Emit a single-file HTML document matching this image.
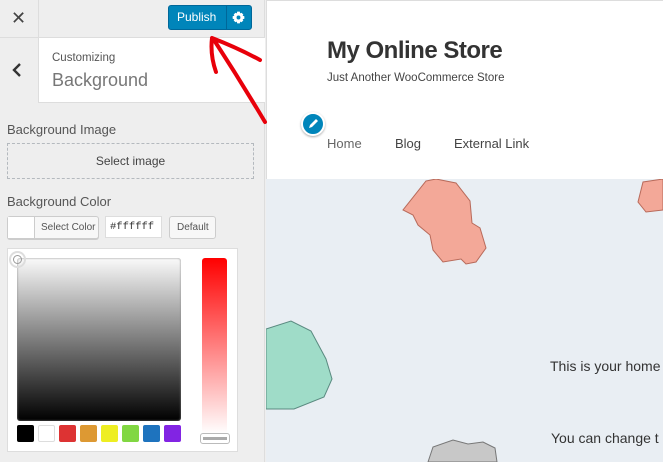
<!DOCTYPE html>
<html><head><style>
*{margin:0;padding:0;box-sizing:border-box}
body{width:663px;height:462px;overflow:hidden;font-family:"Liberation Sans",sans-serif;position:relative;background:#eee}
.abs{position:absolute}
</style></head><body>
<div class="abs" style="left:0;top:0;width:265px;height:462px;background:#eeeeee;border-right:1px solid #ddd"></div>
<div class="abs" style="left:0;top:0;width:265px;height:38px;border-bottom:1px solid #ddd"></div>
<div class="abs" style="left:38px;top:0;width:1px;height:38px;background:#ddd"></div>
<div class="abs" style="left:11px;top:8px;font-size:18px;color:#444">✕</div>
<div class="abs" style="left:168px;top:5px;width:84px;height:25px;background:#0085ba;border:1px solid #006799;border-radius:3px"></div>
<div class="abs" style="left:226px;top:6px;width:1px;height:23px;background:#006799"></div>
<div class="abs" style="left:177px;top:10px;font-size:12px;color:#fff">Publish</div>
<svg class="abs" style="left:232px;top:11px" width="13" height="13" viewBox="0 0 20 20"><path fill="#fff" d="M8 1h4l.6 2.6 2-1 2.8 2.8-1 2L19 8v4l-2.6.6 1 2-2.8 2.8-2-1L12 19H8l-.6-2.6-2 1-2.8-2.8 1-2L1 12V8l2.6-.6-1-2 2.8-2.8 2 1zM10 7a3 3 0 100 6 3 3 0 000-6z"/></svg>
<div class="abs" style="left:0;top:38px;width:265px;height:65px;background:#fff;border-bottom:1px solid #ddd"></div>
<div class="abs" style="left:0;top:38px;width:39px;height:65px;background:#eee;border-right:1px solid #ddd"></div>
<svg class="abs" style="left:12px;top:63px" width="10" height="14"><path d="M8 1L2 7l6 6" stroke="#333" stroke-width="2.4" fill="none"/></svg>
<div class="abs" style="left:52px;top:52px;font-size:11.5px;color:#555">Customizing</div>
<div class="abs" style="left:52px;top:70px;font-size:18px;color:#777">Background</div>
<div class="abs" style="left:7px;top:122px;font-size:13px;color:#555">Background Image</div>
<div class="abs" style="left:7px;top:143px;width:247px;height:36px;border:1px dashed #b4b9be"></div>
<div class="abs" style="left:0;top:154px;width:261px;text-align:center;font-size:12px;color:#444">Select image</div>
<div class="abs" style="left:7px;top:194px;font-size:13px;color:#555">Background Color</div>
<div class="abs" style="left:7px;top:216px;width:92px;height:23px;background:#f7f7f7;border:1px solid #ccc;border-radius:3px;box-shadow:0 1px 0 #ccc"></div>
<div class="abs" style="left:8px;top:217px;width:27px;height:21px;background:#fff;border-right:1px solid #ccc"></div>
<div class="abs" style="left:41px;top:222px;font-size:10px;color:#555">Select Color</div>
<div class="abs" style="left:105px;top:216px;width:57px;height:22px;background:#fff;border:1px solid #ddd"></div>
<div class="abs" style="left:110px;top:221px;font-family:'Liberation Mono',monospace;font-size:10.5px;color:#333">#ffffff</div>
<div class="abs" style="left:169px;top:216px;width:47px;height:23px;background:#f7f7f7;border:1px solid #ccc;border-radius:3px"></div>
<div class="abs" style="left:177px;top:222px;font-size:10px;color:#555">Default</div>
<div class="abs" style="left:7px;top:248px;width:231px;height:204px;background:#fff;border:1px solid #ddd"></div>
<div class="abs" style="left:17px;top:258px;width:164px;height:163px;border-radius:3px;background:linear-gradient(#fafafa,#000);box-shadow:inset 0 0 2px #888"></div>
<div class="abs" style="left:9px;top:251px;width:17px;height:17px;border-radius:50%;border:2px solid #ddd"></div>
<div class="abs" style="left:13px;top:255px;width:9px;height:9px;border-radius:50%;border:1px solid #999"></div>
<div class="abs" style="left:202px;top:258px;width:25px;height:176px;border-radius:3px;background:linear-gradient(#f00,#fff)"></div>
<div class="abs" style="left:200px;top:433px;width:30px;height:11px;border:1px solid #bbb;border-radius:3px;background:#fff"></div>
<div class="abs" style="left:203px;top:437px;width:24px;height:3px;background:#aaa"></div>
<div class="abs" style="left:17px;top:425px;display:flex;gap:4px">
<div style="width:17px;height:17px;border-radius:2px;background:#000"></div>
<div style="width:17px;height:17px;border-radius:2px;background:#fff;border:1px solid #ddd"></div>
<div style="width:17px;height:17px;border-radius:2px;background:#dd3333"></div>
<div style="width:17px;height:17px;border-radius:2px;background:#dd9933"></div>
<div style="width:17px;height:17px;border-radius:2px;background:#eeee22"></div>
<div style="width:17px;height:17px;border-radius:2px;background:#81d742"></div>
<div style="width:17px;height:17px;border-radius:2px;background:#1e73be"></div>
<div style="width:17px;height:17px;border-radius:2px;background:#8224e3"></div>
</div>
<div class="abs" style="left:266px;top:0;width:397px;height:462px;background:#e9eef3"></div>
<div class="abs" style="left:266px;top:0;width:397px;height:179px;background:#fff;border-top:1px solid #ddd;border-left:1px solid #ddd"></div>
<div class="abs" style="left:327px;top:37px;font-size:24px;font-weight:bold;color:#333;letter-spacing:-0.5px">My Online Store</div>
<div class="abs" style="left:327px;top:72px;font-size:11.5px;color:#444">Just Another WooCommerce Store</div>
<div class="abs" style="left:327px;top:136px;font-size:13px;color:#666">Home</div>
<div class="abs" style="left:395px;top:136px;font-size:13px;color:#444">Blog</div>
<div class="abs" style="left:454px;top:136px;font-size:13px;color:#444">External Link</div>
<div class="abs" style="left:301px;top:112px;width:24px;height:24px;border-radius:50%;background:#0085ba;border:2px solid #fff;box-shadow:0 1px 2px #aaa"></div>
<svg class="abs" style="left:306px;top:117px" width="14" height="14" viewBox="0 0 14 14"><path d="M3 11l1-3 6-6 2 2-6 6z" fill="#fff"/></svg>
<div class="abs" style="left:550px;top:358px;font-size:14px;color:#333;white-space:nowrap">This is your home</div>
<div class="abs" style="left:551px;top:430px;font-size:14px;color:#333;white-space:nowrap">You can change t</div>
<svg class="abs" style="left:266px;top:179px" width="397" height="283">
<path d="M160 2l10-2 20 4 14 18 2 22 8 5 6 20-10 14-10 2-5-5-18 3-10-12-3-15-12-10-5-10-10-5z" fill="#f3a898" stroke="#b86a5a"/>
<path d="M397 0l-20 3-5 20 8 10 17-2z" fill="#f3a898" stroke="#b86a5a"/>
<path d="M0 150l25-8 20 10 15 28 6 20-8 18-30 12-28 0z" fill="#9fdcc8" stroke="#5a8a80"/>
<path d="M162 283l5-15 20-7 15 4 15-2 12 6 2 14z" fill="#c8c8c8" stroke="#777"/>
</svg>
<svg class="abs" style="left:0;top:0" width="300" height="140"><path d="M265 122 Q240 80 214 40 M212 38 Q210 55 216 72 M212 38 Q238 48 260 60" stroke="#e8000a" stroke-width="4" fill="none" stroke-linecap="round"/></svg>
</body></html>
